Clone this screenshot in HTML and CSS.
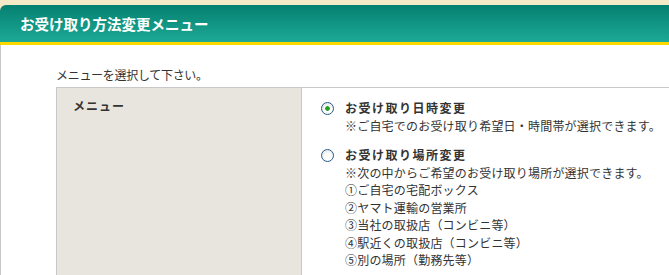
FILE: index.html
```html
<!DOCTYPE html>
<html lang="ja">
<head>
<meta charset="UTF-8">
<meta name="viewport" content="width=device-width, initial-scale=1.0">
<title>お受け取り方法変更メニュー</title>
<link rel="stylesheet" href="styles.css">
</head>
<body>
  <div class="page-head">
    <h1 class="page-title">お受け取り方法変更メニュー</h1>
  </div>
  <div class="content">
    <p class="lead">メニューを選択して下さい。</p>
    <table class="menu-table">
      <tr>
        <th>メニュー</th>
        <td>
          <label class="option">
            <input type="radio" name="menu" checked>
            <span class="option-body">
              <span class="option-title">お受け取り日時変更</span>
              <span class="option-note">※ご自宅でのお受け取り希望日・時間帯が選択できます。</span>
            </span>
          </label>
          <label class="option">
            <input type="radio" name="menu">
            <span class="option-body">
              <span class="option-title">お受け取り場所変更</span>
              <span class="option-note">※次の中からご希望のお受け取り場所が選択できます。</span>
              <span class="option-note">①ご自宅の宅配ボックス</span>
              <span class="option-note">②ヤマト運輸の営業所</span>
              <span class="option-note">③当社の取扱店（コンビニ等）</span>
              <span class="option-note">④駅近くの取扱店（コンビニ等）</span>
              <span class="option-note">⑤別の場所（勤務先等）</span>
            </span>
          </label>
        </td>
      </tr>
    </table>
  </div>
</body>
</html>
```

FILE: styles.css
```css
html, body {
  overflow: hidden;
}

body {
  margin: 0;
  background: #f5e9c6;
  font-family: "Noto Sans CJK JP", "Noto Sans", sans-serif;
  font-size: 12px;
  color: #333;
}

.page-head {
  margin-top: 5px;
  height: 37px;
  background: linear-gradient(#068070, #1ca996);
  border-top-left-radius: 6px;
  border-bottom: 3px solid #ffd800;
  display: flex;
  align-items: center;
}

.page-title {
  margin: 2px 0 0 20px;
  font-size: 14.5px;
  font-weight: bold;
  color: #fff;
  line-height: 1;
}

.content {
  background: #fff;
  border-left: 1px solid #c8c8c8;
  padding: 21px 0 0 55px;
}

.lead {
  margin: 0 0 3px;
  line-height: 18px;
  letter-spacing: -0.3px;
}

.menu-table {
  width: 100%;
  border-collapse: collapse;
}

.menu-table th,
.menu-table td {
  border-top: 1px solid #c8c8c8;
  border-left: 1px solid #c8c8c8;
  vertical-align: top;
  text-align: left;
}

.menu-table th {
  width: 228px;
  background: #e8e5de;
  padding: 9px 0 0 16px;
  font-weight: bold;
  line-height: 18px;
  letter-spacing: 1px;
}

.menu-table td {
  padding: 11px 0 0 19px;
}

.option {
  display: flex;
  gap: 11px;
  margin-bottom: 12px;
  line-height: 17.5px;
}

.option input {
  appearance: none;
  margin: 3px 0 0;
  width: 13px;
  height: 13px;
  border: 1px solid #2a5a8a;
  border-radius: 50%;
  background: radial-gradient(circle at 60% 65%, #fff 30%, #dcdcd6 100%);
  box-sizing: border-box;
  flex: none;
}

.option input:checked {
  background:
    radial-gradient(circle, #21a121 0 2px, transparent 2.6px),
    radial-gradient(circle at 60% 65%, #fff 30%, #dcdcd6 100%);
}

.option-body {
  display: flex;
  flex-direction: column;
}

.option-title {
  font-weight: bold;
  letter-spacing: 1.5px;
}

.option-note {
  letter-spacing: 0.2px;
}
```
